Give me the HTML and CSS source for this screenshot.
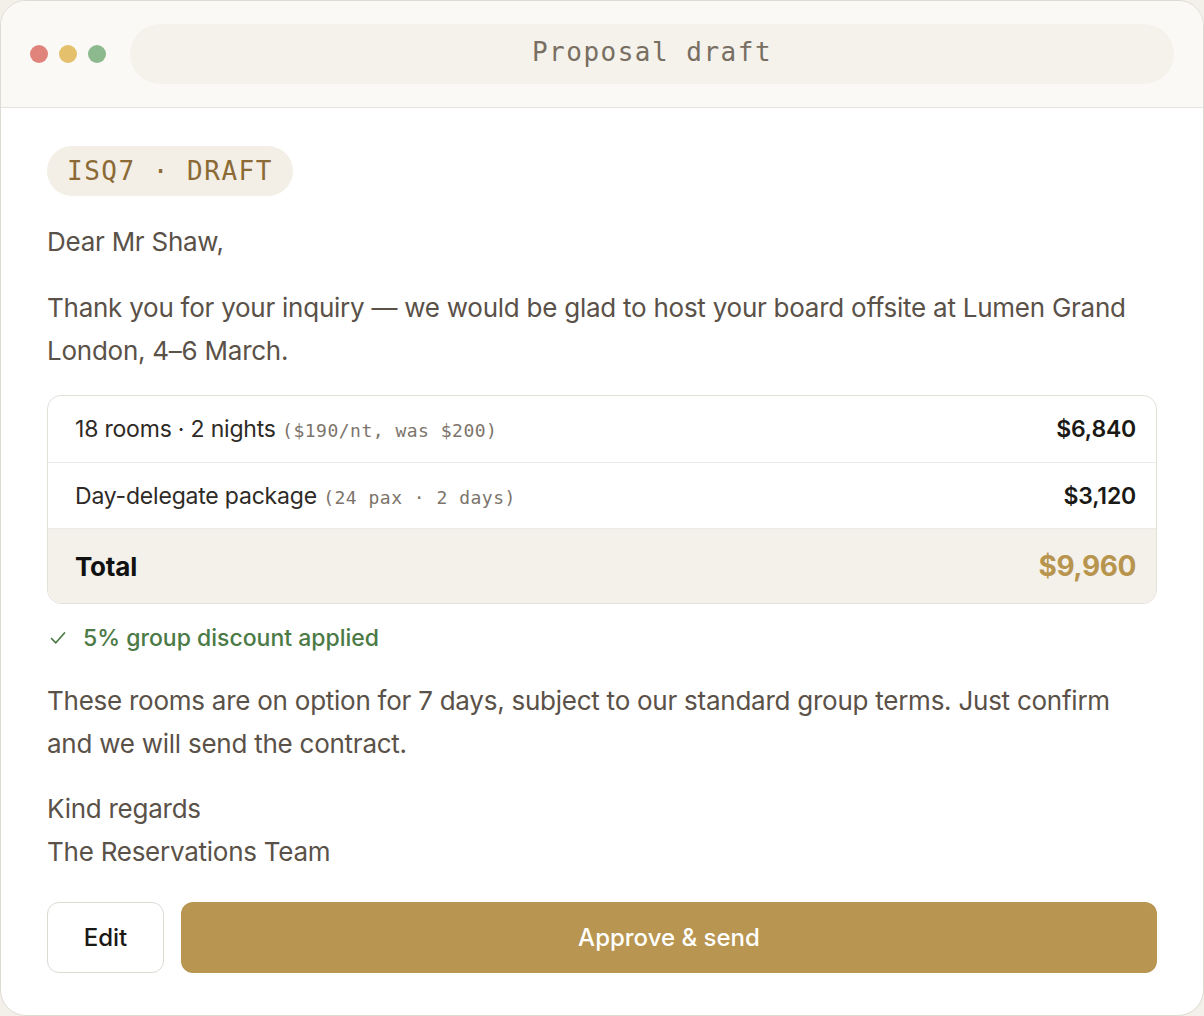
FILE: index.html
```html
<!DOCTYPE html>
<html lang="en">
<head>
<meta charset="utf-8">
<title>Proposal draft</title>
<link rel="stylesheet" href="styles.css">
</head>
<body>
<div class="window">
  <header class="titlebar">
    <div class="lights">
      <span class="light red"></span>
      <span class="light yellow"></span>
      <span class="light green"></span>
    </div>
    <div class="address">Proposal draft</div>
  </header>
  <main class="content">
    <div class="badge">ISQ7 · DRAFT</div>
    <p class="text">Dear Mr Shaw,</p>
    <p class="text">Thank you for your inquiry — we would be glad to host your board offsite at Lumen Grand London, 4–6 March.</p>
    <div class="quote">
      <div class="row first">
        <span class="label">18 rooms · 2 nights <span class="note">($190/nt, was $200)</span></span>
        <span class="amount">$6,840</span>
      </div>
      <div class="row">
        <span class="label">Day-delegate package <span class="note">(24 pax · 2 days)</span></span>
        <span class="amount">$3,120</span>
      </div>
      <div class="row total">
        <span class="label">Total</span>
        <span class="amount">$9,960</span>
      </div>
    </div>
    <div class="discount">
      <svg class="check" width="16" height="14" viewBox="0 0 16 14" fill="none">
        <path d="M1.5 7.5 L5.8 11.8 L14.5 2" stroke="currentColor" stroke-width="1.7" stroke-linecap="round" stroke-linejoin="round"/>
      </svg>
      <span>5% group discount applied</span>
    </div>
    <p class="text terms">These rooms are on option for 7 days, subject to our standard group terms. Just confirm and we will send the contract.</p>
    <p class="text signoff">Kind regards<br>The Reservations Team</p>
    <div class="actions">
      <button class="btn edit">Edit</button>
      <button class="btn approve">Approve &amp; send</button>
    </div>
  </main>
</div>
</body>
</html>
```
FILE: styles.css
```css
* { box-sizing: border-box; }

html, body {
  margin: 0;
  height: 100%;
}

body {
  background: #f3f0e9;
  font-family: Inter, "Noto Sans", sans-serif;
  color: #5a5148;
}

.window {
  width: 1204px;
  height: 1016px;
  background: #ffffff;
  border: 1px solid #dedbd5;
  border-radius: 26px;
  overflow: hidden;
  display: flex;
  flex-direction: column;
}

.titlebar {
  height: 107px;
  flex: none;
  background: #faf9f5;
  border-bottom: 1px solid #e6e3dd;
  display: flex;
  align-items: center;
  padding: 0 29px 0 29px;
  gap: 24px;
}

.lights {
  display: flex;
  gap: 11px;
}

.light {
  width: 18px;
  height: 18px;
  border-radius: 50%;
}
.red { background: #e0837a; }
.yellow { background: #e5c06c; }
.green { background: #8cb98d; }

.address {
  flex: 1;
  height: 60px;
  padding-bottom: 4px;
  border-radius: 30px;
  background: #f4f2eb;
  display: flex;
  align-items: center;
  justify-content: center;
  font-family: "DejaVu Sans Mono", "Liberation Mono", monospace;
  font-size: 26px;
  letter-spacing: 1.5px;
  color: #786e62;
}

.content {
  flex: 1;
  padding: 38px 46px 0 46px;
  display: flex;
  flex-direction: column;
  align-items: stretch;
}

.badge {
  align-self: flex-start;
  height: 50px;
  padding: 0 20px;
  border-radius: 25px;
  background: #f3efe6;
  color: #8b6a36;
  font-family: "DejaVu Sans Mono", "Liberation Mono", monospace;
  font-size: 26px;
  letter-spacing: 1.5px;
  display: flex;
  align-items: center;
  margin-bottom: 24px;
}

.text {
  margin: 0 0 23px 0;
  font-size: 26px;
  line-height: 43px;
  letter-spacing: -0.25px;
  color: #5a5148;
}

.text.terms { margin-bottom: 22px; }
.text.signoff { margin-bottom: 0; }

.quote {
  border: 1px solid #e3e0da;
  border-radius: 14px;
  overflow: hidden;
  margin-bottom: 19px;
}

.row {
  display: flex;
  align-items: center;
  justify-content: space-between;
  height: 66px;
  padding: 0 20px 0 27px;
  border-bottom: 1px solid #ecebe7;
  font-size: 23px;
  letter-spacing: -0.2px;
  color: #2e2a26;
}

.row.first { height: 67px; }

.note {
  font-family: "DejaVu Sans Mono", "Liberation Mono", monospace;
  font-size: 18px;
  letter-spacing: 0.5px;
  color: #7c746b;
}

.amount {
  font-weight: 600;
  color: #1b1915;
}

.row.total {
  height: 74px;
  border-bottom: none;
  background: #f4f1eb;
}

.total .label {
  font-size: 26px;
  font-weight: 700;
  color: #111;
}

.total .amount {
  font-size: 28px;
  font-weight: 700;
  letter-spacing: -0.4px;
  color: #b8954f;
}

.discount {
  display: flex;
  align-items: center;
  gap: 17px;
  padding-left: 3px;
  color: #4b7a46;
  font-size: 23px;
  font-weight: 500;
  height: 30px;
  margin-bottom: 26px;
}

.check { flex: none; }

.actions {
  display: flex;
  gap: 17px;
  margin-top: 29px;
}

.btn {
  height: 71px;
  border-radius: 12px;
  font-family: Inter, "Noto Sans", sans-serif;
  font-size: 24px;
  font-weight: 500;
  cursor: pointer;
}

.btn.edit {
  width: 117px;
  background: #fff;
  border: 1px solid #dddad4;
  color: #1b1915;
}

.btn.approve {
  flex: 1;
  background: #b89550;
  border: none;
  color: #fff;
}
```
